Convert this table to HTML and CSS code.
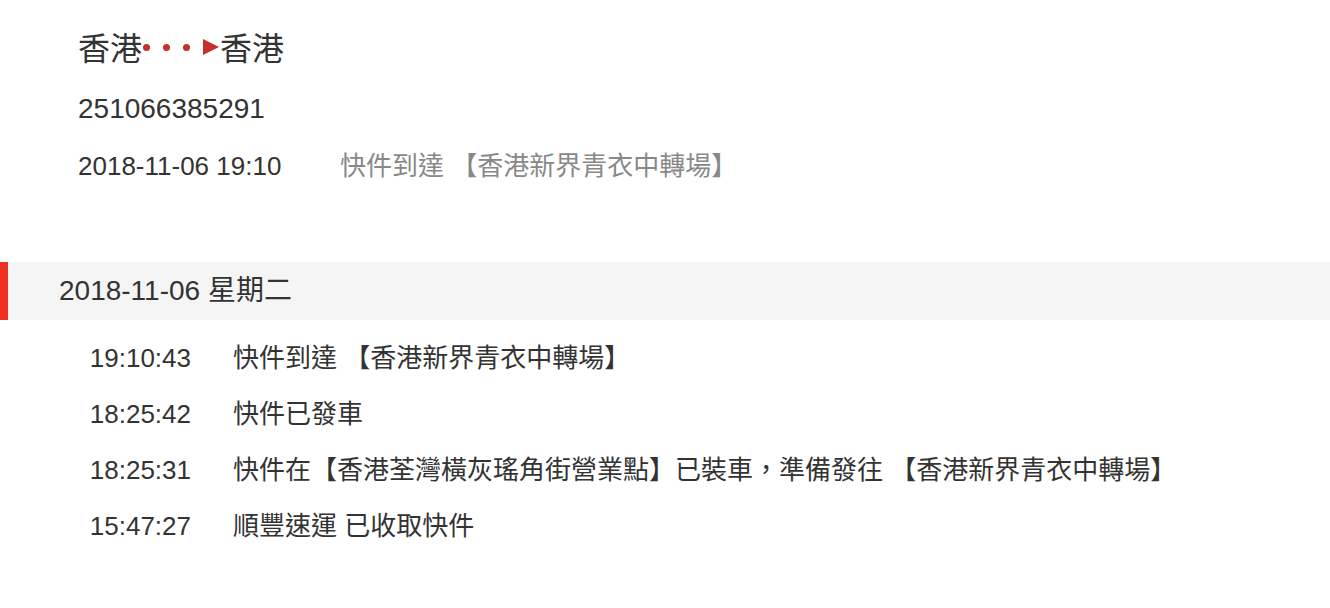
FILE: index.html
```html
<!DOCTYPE html>
<html lang="zh-Hant">

<head>
    <meta charset="UTF-8">
    <meta name="viewport" content="width=device-width, initial-scale=1.0">
    <title>快件追蹤</title>
    <link rel="stylesheet" href="styles.css">
</head>

<body>
    <div class="summary">
        <div class="route">
            <span>香港</span>
            <span class="arrow">
                <i class="dot"></i>
                <i class="dot"></i>
                <i class="dot"></i>
                <i class="tri"></i>
            </span>
            <span>香港</span>
        </div>
        <div class="waybill">251066385291</div>
        <div class="latest">
            <span class="latest-time">2018-11-06 19:10</span>
            <span class="latest-desc">快件到達 【香港新界青衣中轉場】</span>
        </div>
    </div>

    <div class="day">2018-11-06 星期二</div>

    <div class="steps">
        <div class="step">
            <span class="time">19:10:43</span>
            <span class="desc">快件到達 【香港新界青衣中轉場】</span>
        </div>
        <div class="step">
            <span class="time">18:25:42</span>
            <span class="desc">快件已發車</span>
        </div>
        <div class="step">
            <span class="time">18:25:31</span>
            <span class="desc">快件在【香港荃灣橫灰瑤角街營業點】已裝車，準備發往 【香港新界青衣中轉場】</span>
        </div>
        <div class="step">
            <span class="time">15:47:27</span>
            <span class="desc">順豐速運 已收取快件</span>
        </div>
    </div>
</body>

</html>
```

FILE: styles.css
```css
body {
    margin: 0;
    font-family: "Liberation Sans", "Noto Sans CJK TC", sans-serif;
    color: #333;
    background: #fff;
}

.summary {
    padding: 26px 0 0 78px;
}

.route {
    display: flex;
    align-items: center;
    height: 40px;
    font-size: 32px;
}

.arrow {
    display: flex;
    align-items: center;
    padding-left: 1px;
    margin-top: 2px;
}

.dot {
    width: 7px;
    height: 7px;
    margin-right: 13px;
    border-radius: 50%;
    background-color: #c4302b;
}

.tri {
    width: 0;
    height: 0;
    margin-right: 1px;
    border-top: 8px solid transparent;
    border-bottom: 8px solid transparent;
    border-left: 16px solid #c4302b;
}

.waybill {
    margin-top: 23px;
    height: 40px;
    line-height: 40px;
    font-size: 28px;
}

.latest {
    display: flex;
    margin-top: 17px;
    height: 40px;
    line-height: 40px;
    font-size: 26px;
}

.latest-time {
    width: 262px;
}

.latest-desc {
    color: #888;
}

.day {
    margin-top: 76px;
    height: 58px;
    line-height: 58px;
    padding-left: 51px;
    border-left: 8px solid #ee3124;
    background-color: #f5f5f5;
    font-size: 28px;
}

.steps {
    padding-top: 10px;
}

.step {
    display: grid;
    grid-template-columns: 191px auto;
    column-gap: 42px;
    height: 56px;
    line-height: 56px;
    font-size: 26px;
}

.time {
    text-align: right;
}
```
